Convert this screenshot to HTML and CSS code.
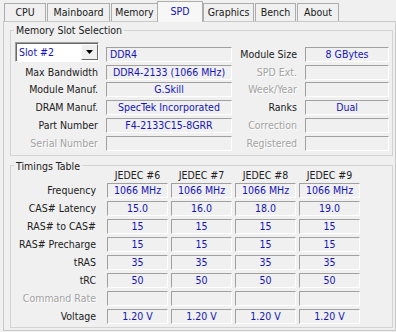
FILE: index.html
```html
<!DOCTYPE html>
<html>
  <head>
    <meta charset="utf-8">
    <title>CPU-Z SPD</title>
    <link rel="stylesheet" href="styles.css">
  </head>
  <body>
    <div class="window">
      <div class="tabs">
        <div class="tab tab-cpu">CPU</div>
        <div class="tab tab-mainboard">Mainboard</div>
        <div class="tab tab-memory">Memory</div>
        <div class="tab tab-spd active">SPD</div>
        <div class="tab tab-graphics">Graphics</div>
        <div class="tab tab-bench">Bench</div>
        <div class="tab tab-about">About</div>
      </div>

      <div class="panel">
        <fieldset class="group">
          <legend>Memory Slot Selection</legend>
          <div class="slot-grid">
            <div class="combo">
              <span class="combo-text">Slot #2</span>
              <span class="combo-btn">
                <svg width="7" height="4" viewBox="0 0 7 4"><polygon points="0,0 7,0 3.5,4" fill="#000"/></svg>
              </span>
            </div>
            <div class="field left">DDR4</div>
            <div class="label">Module Size</div>
            <div class="field">8 GBytes</div>

            <div class="label">Max Bandwidth</div>
            <div class="field">DDR4-2133 (1066 MHz)</div>
            <div class="label off">SPD Ext.</div>
            <div class="field"></div>

            <div class="label">Module Manuf.</div>
            <div class="field">G.Skill</div>
            <div class="label off">Week/Year</div>
            <div class="field"></div>

            <div class="label">DRAM Manuf.</div>
            <div class="field">SpecTek Incorporated</div>
            <div class="label">Ranks</div>
            <div class="field">Dual</div>

            <div class="label">Part Number</div>
            <div class="field">F4-2133C15-8GRR</div>
            <div class="label off">Correction</div>
            <div class="field"></div>

            <div class="label off">Serial Number</div>
            <div class="field"></div>
            <div class="label off">Registered</div>
            <div class="field"></div>
          </div>
        </fieldset>

        <fieldset class="group timings">
          <legend>Timings Table</legend>
          <div class="timing-grid">
            <div></div>
            <div class="head">JEDEC #6</div>
            <div class="head">JEDEC #7</div>
            <div class="head">JEDEC #8</div>
            <div class="head">JEDEC #9</div>

            <div class="label">Frequency</div>
            <div class="field">1066 MHz</div>
            <div class="field">1066 MHz</div>
            <div class="field">1066 MHz</div>
            <div class="field">1066 MHz</div>

            <div class="label">CAS# Latency</div>
            <div class="field">15.0</div>
            <div class="field">16.0</div>
            <div class="field">18.0</div>
            <div class="field">19.0</div>

            <div class="label">RAS# to CAS#</div>
            <div class="field">15</div>
            <div class="field">15</div>
            <div class="field">15</div>
            <div class="field">15</div>

            <div class="label">RAS# Precharge</div>
            <div class="field">15</div>
            <div class="field">15</div>
            <div class="field">15</div>
            <div class="field">15</div>

            <div class="label">tRAS</div>
            <div class="field">35</div>
            <div class="field">35</div>
            <div class="field">35</div>
            <div class="field">35</div>

            <div class="label">tRC</div>
            <div class="field">50</div>
            <div class="field">50</div>
            <div class="field">50</div>
            <div class="field">50</div>

            <div class="label off">Command Rate</div>
            <div class="field"></div>
            <div class="field"></div>
            <div class="field"></div>
            <div class="field"></div>

            <div class="label">Voltage</div>
            <div class="field">1.20 V</div>
            <div class="field">1.20 V</div>
            <div class="field">1.20 V</div>
            <div class="field">1.20 V</div>
          </div>
        </fieldset>
      </div>
    </div>
  </body>
</html>
```

FILE: styles.css
```css
* {
  box-sizing: border-box;
}

body {
  margin: 0;
  background-color: #f0f0f0;
  font-family: "DejaVu Sans Condensed", "DejaVu Sans", sans-serif;
  font-stretch: condensed;
  font-size: 10.5px;
  color: #202020;
}

.window {
  width: 396px;
  height: 332px;
  padding: 1px 0 0 3px;
}

/* tab strip */
.tabs {
  display: flex;
  align-items: flex-end;
  height: 20px;
  padding-left: 1px;
}

.tab {
  height: 18px;
  margin-right: 1px;
  border: 1px solid #acacac;
  border-bottom: 0;
  background-color: #f0f0f0;
  line-height: 16px;
  text-align: center;
  color: #1a1a1a;
}

.tab-cpu { width: 42px; }
.tab-mainboard { width: 63px; }
.tab-memory { width: 47px; }
.tab-spd { width: 46px; }
.tab-graphics { width: 51px; }
.tab-bench { width: 41px; }
.tab-about { width: 42px; }

.tab.active {
  position: relative;
  z-index: 1;
  height: 21px;
  margin: 0 0 -1px -2px;
  background-color: #f7f7f7;
  line-height: 18px;
  color: #1010c0;
}

/* page */
.panel {
  height: 310px;
  padding: 2px 2px 0 6px;
  border: 1px solid #c8c8c8;
}

.group {
  margin: 0;
  padding: 6px 0 4px 4px;
  min-width: 0;
  border: 1px solid #d3d3d3;
}

.group legend {
  margin-left: -1px;
  padding: 0 2px;
  line-height: 12px;
}

.timings {
  margin-top: 4px;
  padding: 0 0 3px 4px;
}

.slot-grid {
  display: grid;
  grid-template-columns: 91px 126px 73px 84px;
  grid-template-rows: 19.75px repeat(5, 15px);
  row-gap: 2.75px;
  align-items: end;
}

.timing-grid {
  display: grid;
  grid-template-columns: 89px repeat(4, 61px);
  grid-template-rows: 11px repeat(8, 15px);
  column-gap: 3px;
  row-gap: 2.93px;
  margin-top: -2px;
}

.label {
  height: 15px;
  padding-right: 8px;
  line-height: 15px;
  text-align: right;
  white-space: nowrap;
}

.label.off {
  color: #a3a3a3;
  text-shadow: 1px 1px 0 #fff;
}

.head {
  line-height: 11px;
  text-align: center;
  white-space: nowrap;
}

.field {
  height: 15px;
  border: 1px solid;
  border-color: #a0a0a0 #fff #fff #a0a0a0;
  line-height: 13px;
  text-align: center;
  white-space: nowrap;
  overflow: hidden;
  color: #1414b8;
}

.field.left {
  text-align: left;
  padding-left: 3px;
}

/* slot selector */
.combo {
  display: flex;
  width: 84px;
  height: 19.75px;
  border: 1px solid;
  border-color: #a0a0a0 #fff #fff #a0a0a0;
  box-shadow: inset 1px 1px 0 #696969;
  background-color: #fff;
}

.combo-text {
  flex: 1;
  padding: 1px 0 0 3px;
  line-height: 16px;
  color: #1414b8;
}

.combo-btn {
  display: flex;
  align-items: center;
  justify-content: center;
  width: 17px;
  margin: 1px 0 1px 0;
  border: 1px solid;
  border-color: #fff #696969 #696969 #fff;
  background-color: #f0f0f0;
}
```
